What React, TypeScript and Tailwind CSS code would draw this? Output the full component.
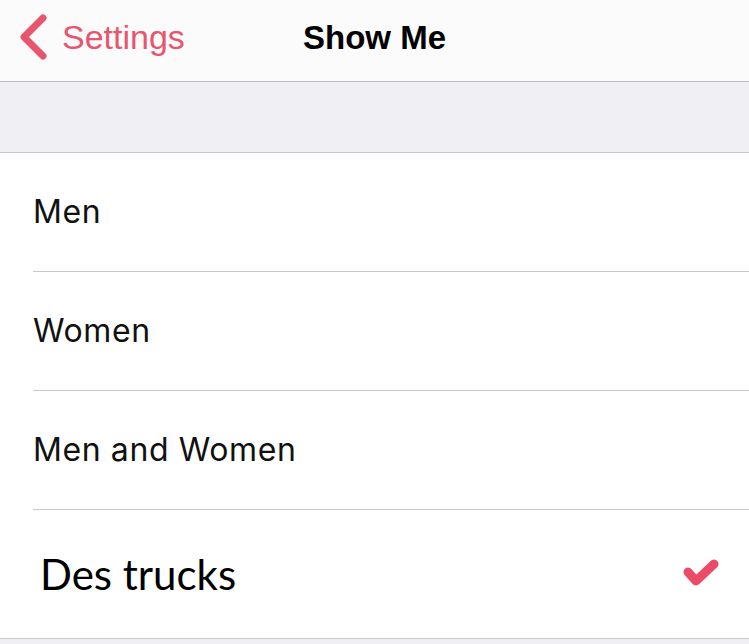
const OPTIONS = ["Men", "Women", "Men and Women"];

export default function App() {
  return (
    <div className="w-[749px] h-[644px] overflow-hidden bg-[#efeff4]" style={{ fontFamily: "'Liberation Sans', Arial, sans-serif" }}>
      {/* Nav bar */}
      <div className="h-[82px] flex items-center pb-[6px] bg-[#fbfbfc] border-b border-[#bdbdc2]">
        <svg width="30" height="48" viewBox="0 0 30 48" className="ml-[17px] shrink-0">
          <path d="M26 4 L7 23 L26 42" fill="none" stroke="#e8566e" strokeWidth="7" strokeLinecap="round" strokeLinejoin="round" />
        </svg>
        <span className="ml-[15px] w-[241px] text-[34px] text-[#e8566e]">Settings</span>
        <span className="text-[33px] font-bold text-black">Show Me</span>
      </div>

      {/* Gray spacer */}
      <div className="h-[71px] border-b border-[#c8c7cc]" />

      {/* Options */}
      <div className="bg-white">
        {OPTIONS.map((o) => (
          <div key={o} className="pl-[33px]">
            <div className="h-[119px] flex items-center border-b border-[#c8c7cc] text-[32px] tracking-[0.6px] text-[#111]" style={{ fontFamily: "Inter, sans-serif" }}>
              {o}
            </div>
          </div>
        ))}
        <div className="h-[129px] flex items-center justify-between pl-[40px] pr-[28px] border-b border-[#c8c7cc]">
          <span className="text-[42px] text-black" style={{ fontFamily: "Lato, sans-serif" }}>Des trucks</span>
          <svg width="40" height="34" viewBox="0 0 40 34" className="mt-[-4px]">
            <path d="M7 17 L15 26 L33 9" fill="none" stroke="#ec4b68" strokeWidth="9" strokeLinecap="round" strokeLinejoin="round" />
          </svg>
        </div>
      </div>
    </div>
  );
}
